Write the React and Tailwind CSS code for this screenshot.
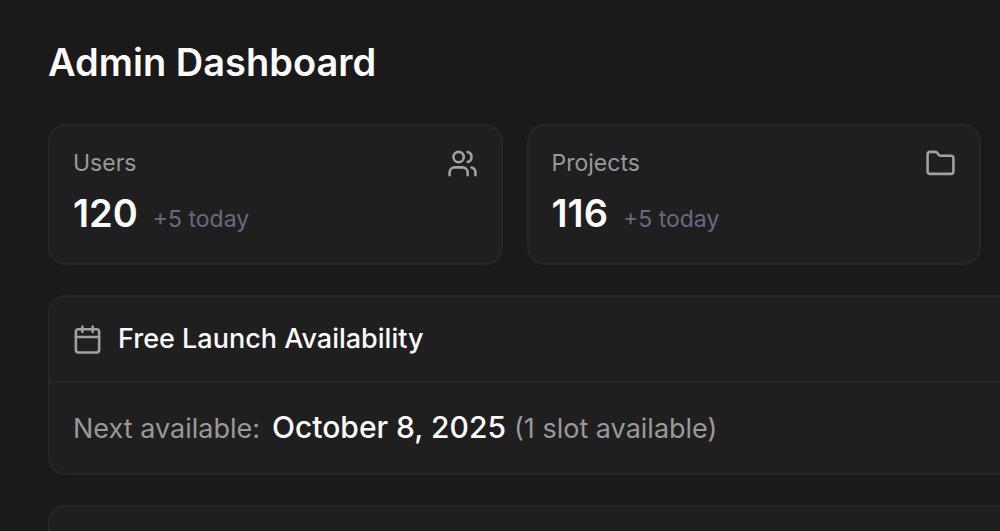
import React from 'react';
import { Calendar, Folder, Users } from 'lucide-react';

const stats = [
  { label: 'Users', value: 120, today: 5, icon: Users },
  { label: 'Projects', value: 116, today: 5, icon: Folder }
];

const StatCard = ({ label, value, today, icon: Icon }) => (
  <div className="rounded-[18px] border-2 border-[#272727] bg-[#1f1f1f] px-[23px] pt-[21px] pb-6">
    <div className="flex items-center justify-between">
      <p className="text-[23px] leading-8 text-[#999999]">{label}</p>
      <Icon className="h-[31px] w-[31px] text-[#a1a1a1]" strokeWidth={2} />
    </div>
    <div className="mt-2 flex items-baseline gap-[15px]">
      <span className="text-[38px] leading-[52px] font-semibold text-[#fafafa]">{value}</span>
      <span className="text-[23px] text-[#6a6a7d]">+{today} today</span>
    </div>
  </div>
);

const App = () => {
  return (
    <div className="h-screen overflow-hidden bg-[#1a1a1a] font-['Inter',sans-serif] text-[#fafafa]">
      <main className="pt-9 pl-12">
        <h1 className="text-[38px] leading-[52px] font-semibold">Admin Dashboard</h1>

        {/* Stats */}
        <div className="mt-9 mr-[19px] grid grid-cols-2 gap-6">
          {stats.map((stat) => (
            <StatCard key={stat.label} {...stat} />
          ))}
        </div>

        {/* Free launch availability */}
        <section className="mt-[30px] rounded-l-[18px] border-2 border-r-0 border-[#272727] bg-[#1f1f1f]">
          <div className="flex items-center gap-[15px] border-b-2 border-[#272727] px-[22px] py-6">
            <Calendar className="h-[31px] w-[31px] text-[#a1a1a1]" strokeWidth={2} />
            <h2 className="text-[27px] leading-9 font-medium">Free Launch Availability</h2>
          </div>
          <div className="flex items-baseline px-[23px] py-6 text-[27px] leading-[41px] text-[#999999]">
            <span>Next available:</span>
            <span className="ml-3 text-[30px] font-medium text-[#fafafa]">October 8, 2025</span>
            <span className="ml-2">(1 slot available)</span>
          </div>
        </section>

        <section className="mt-[30px] h-24 rounded-l-[18px] border-2 border-r-0 border-[#272727] bg-[#1f1f1f]" />
      </main>
    </div>
  );
};

export default App;
